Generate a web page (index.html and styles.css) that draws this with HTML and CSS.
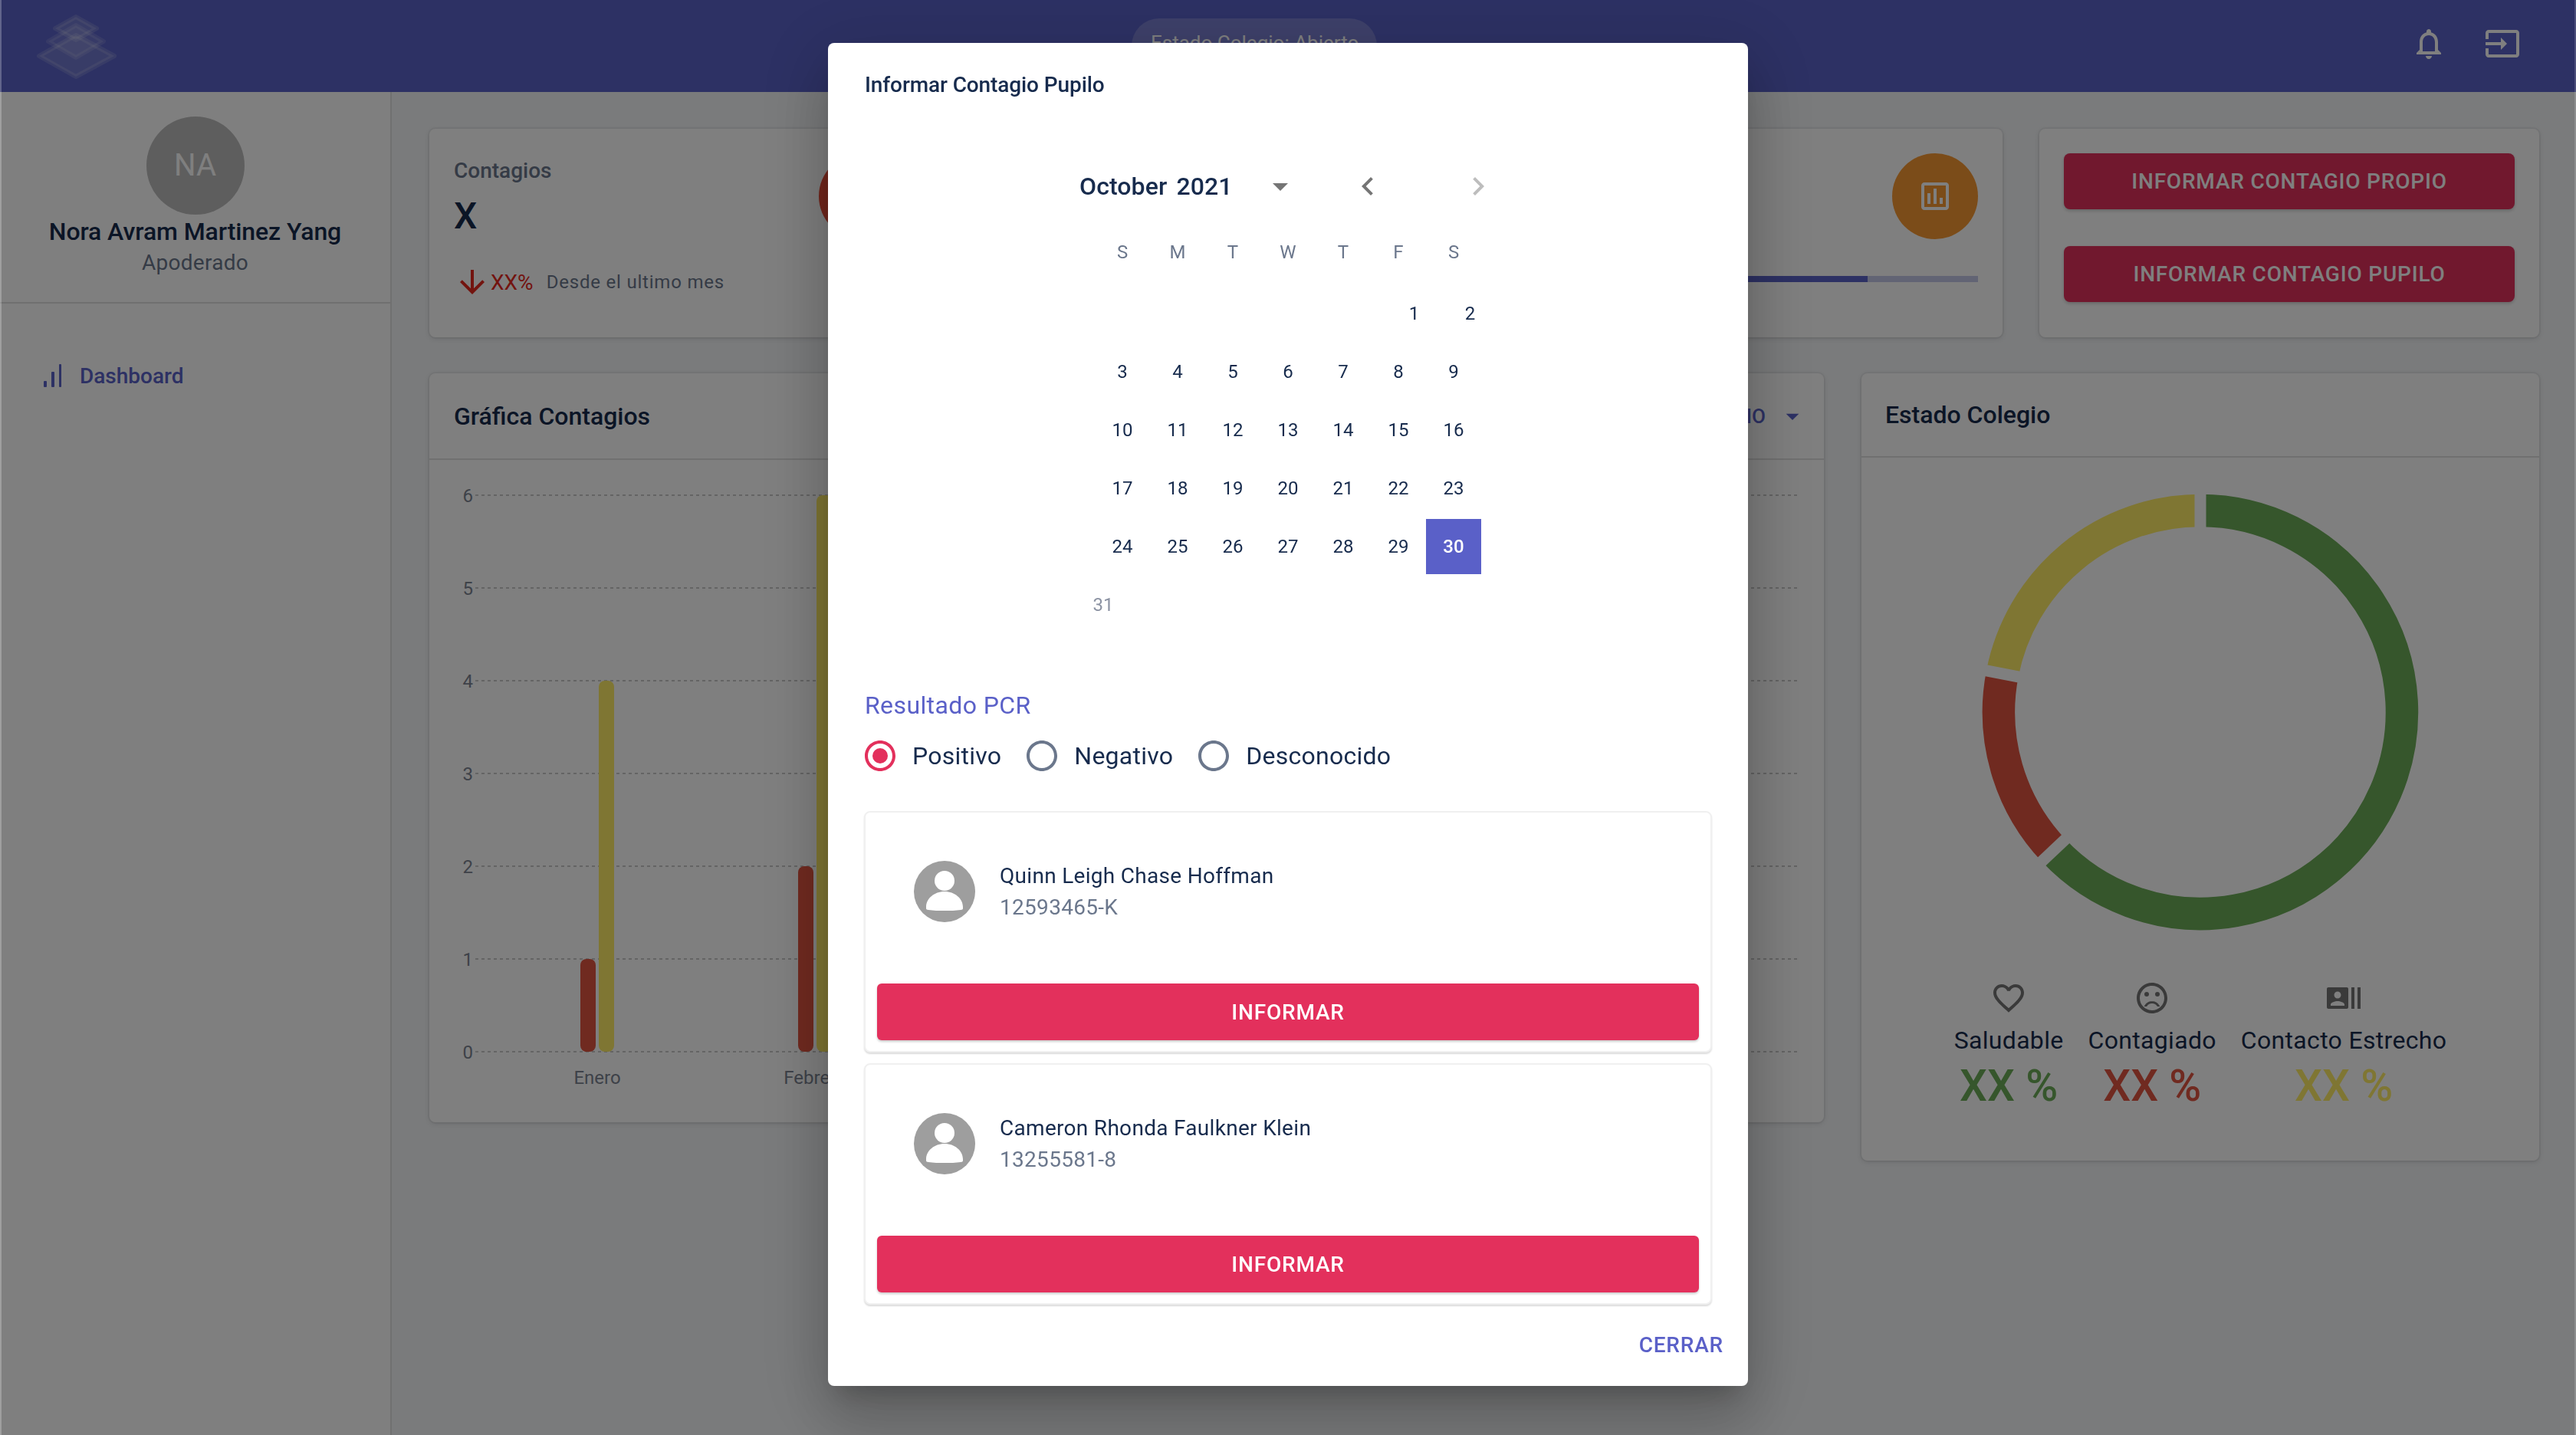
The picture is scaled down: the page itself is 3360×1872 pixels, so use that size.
FILE: index.html
```html
<!DOCTYPE html>
<html lang="es">
<head>
    <meta charset="UTF-8">
    <meta name="viewport" content="width=device-width, initial-scale=1.0">
    <title>Informar Contagio Pupilo</title>
    <link rel="stylesheet" href="styles.css">
</head>
<body>
    <header class="topbar">
        <svg class="logo" viewBox="0 0 180 120">
            <polygon class="logo_low" points="99,46 149,73 99,100 51,73"/>
            <polygon class="logo_mid" points="99,33 135,54 99,75 63,54"/>
            <polygon class="logo_top" points="99,22 126,37 99,52 72,37"/>
        </svg>
        <div class="status_pill">Estado Colegio: Abierto</div>
        <div class="topbar_icons">
            <svg class="icon48" viewBox="0 0 24 24"><path d="M12 22c1.1 0 2-.9 2-2h-4c0 1.1.9 2 2 2zm6-6v-5c0-3.07-1.63-5.64-4.5-6.32V4c0-.83-.67-1.5-1.5-1.5s-1.5.67-1.5 1.5v.68C7.64 5.36 6 7.92 6 11v5l-2 2v1h16v-1l-2-2zm-2 1H8v-6c0-2.48 1.51-4.5 4-4.5s4 2.02 4 4.5v6z"/></svg>
            <svg class="icon48" viewBox="0 0 24 24"><path d="M21 3.01H3c-1.1 0-2 .9-2 2V9h2V4.99h18v14.03H3V15H1v4.01c0 1.1.9 1.98 2 1.98h18c1.1 0 2-.88 2-1.98v-14c0-1.11-.9-2-2-2zM11 16l4-4-4-4v3H1v2h10v3z"/></svg>
        </div>
    </header>

    <div class="shell">
        <aside class="sidebar">
            <div class="profile">
                <div class="profile_avatar">NA</div>
                <div class="profile_name">Nora Avram Martinez Yang</div>
                <div class="profile_role">Apoderado</div>
            </div>
            <nav class="nav_item">
                <svg class="nav_icon" viewBox="0 0 24 30">
                    <rect x="1" y="22" width="4" height="8" rx="1"/>
                    <rect x="11" y="10" width="4" height="20" rx="1"/>
                    <rect x="21" y="0" width="3" height="30" rx="1"/>
                </svg>
                Dashboard
            </nav>
        </aside>

        <main class="content">
            <section class="stat_row">
                <div class="card stat_card">
                    <div class="stat_top">
                        <div>
                            <div class="stat_label">Contagios</div>
                            <div class="stat_value">X</div>
                        </div>
                        <div class="stat_circle circle_red"></div>
                    </div>
                    <div class="trend">
                        <svg class="icon48 trend_icon" viewBox="0 0 24 24"><path d="M20 12l-1.41-1.41L13 16.17V4h-2v12.17l-5.58-5.59L4 12l8 8 8-8z"/></svg>
                        <span class="trend_value">XX%</span>
                        <span class="trend_text">Desde el ultimo mes</span>
                    </div>
                </div>
                <div class="card stat_card"></div>
                <div class="card stat_card">
                    <div class="stat_top stat_top_end">
                        <div class="stat_circle circle_orange">
                            <svg class="icon48 circle_icon" viewBox="0 0 24 24"><path d="M19 3H5c-1.1 0-2 .9-2 2v14c0 1.1.9 2 2 2h14c1.1 0 2-.9 2-2V5c0-1.1-.9-2-2-2zm0 16H5V5h14v14zM9 17H7v-7h2v7zm4 0h-2V7h2v10zm4 0h-2v-4h2v4z"/></svg>
                        </div>
                    </div>
                    <div class="progress"><div class="progress_fill"></div></div>
                </div>
                <div class="card action_card">
                    <button class="action_but">INFORMAR CONTAGIO PROPIO</button>
                    <button class="action_but">INFORMAR CONTAGIO PUPILO</button>
                </div>
            </section>

            <section class="chart_row">
                <div class="card chart_card">
                    <div class="card_head">
                        <span class="card_title">Gráfica Contagios</span>
                        <span class="range_select">PROMEDIO
                            <svg class="icon40" viewBox="0 0 24 24"><path d="M7 10l5 5 5-5z"/></svg>
                        </span>
                    </div>
                    <svg class="bars" viewBox="0 0 1819 864">
                        <g class="bars_grid">
                            <line x1="60" x2="1784" y1="46" y2="46"/>
                            <line x1="60" x2="1784" y1="167" y2="167"/>
                            <line x1="60" x2="1784" y1="288" y2="288"/>
                            <line x1="60" x2="1784" y1="409" y2="409"/>
                            <line x1="60" x2="1784" y1="530" y2="530"/>
                            <line x1="60" x2="1784" y1="651" y2="651"/>
                            <line x1="60" x2="1784" y1="772" y2="772"/>
                        </g>
                        <g class="bars_ticks">
                            <text x="57" y="55">6</text>
                            <text x="57" y="176">5</text>
                            <text x="57" y="297">4</text>
                            <text x="57" y="418">3</text>
                            <text x="57" y="539">2</text>
                            <text x="57" y="660">1</text>
                            <text x="57" y="781">0</text>
                        </g>
                        <rect class="bar_red" x="197" y="651" width="20" height="121" rx="8"/>
                        <rect class="bar_yellow" x="221" y="288" width="20" height="484" rx="8"/>
                        <rect class="bar_red" x="481" y="530" width="20" height="242" rx="8"/>
                        <rect class="bar_yellow" x="505" y="46" width="20" height="726" rx="8"/>
                        <g class="bars_months">
                            <text x="219" y="814">Enero</text>
                            <text x="503" y="814">Febrero</text>
                        </g>
                    </svg>
                </div>

                <div class="card state_card">
                    <div class="card_head state_head">
                        <span class="card_title">Estado Colegio</span>
                    </div>
                    <div class="state_body">
                        <svg class="donut" viewBox="0 0 600 600">
                            <path class="seg_green" d="M300 37A263 263 0 1 1 108.5 480.3"/>
                            <path class="seg_red" d="M108.5 480.3A263 263 0 0 1 41.8 249.8"/>
                            <path class="seg_yellow" d="M41.8 249.8A263 263 0 0 1 300 37"/>
                            <line class="seg_gap" x1="300" y1="5" x2="300" y2="75"/>
                            <line class="seg_gap" x1="136.2" y1="454.2" x2="81.6" y2="505.7"/>
                            <line class="seg_gap" x1="79.1" y1="257.1" x2="5.5" y2="242.8"/>
                        </svg>
                        <div class="legend">
                            <div class="legend_item">
                                <svg class="icon48 legend_icon" viewBox="0 0 24 24"><path d="M16.5 3c-1.74 0-3.41.81-4.5 2.09C10.91 3.81 9.24 3 7.5 3 4.42 3 2 5.42 2 8.5c0 3.78 3.4 6.86 8.55 11.54L12 21.35l1.45-1.32C18.6 15.36 22 12.28 22 8.5 22 5.42 19.58 3 16.5 3zm-4.4 15.55l-.1.1-.1-.1C7.14 14.24 4 11.39 4 8.5 4 6.5 5.5 5 7.5 5c1.54 0 3.04.99 3.57 2.36h1.87C13.46 5.99 14.96 5 16.5 5c2 0 3.5 1.5 3.5 3.5 0 2.89-3.14 5.74-7.9 10.05z"/></svg>
                                <div class="legend_label">Saludable</div>
                                <div class="legend_value text_green">XX %</div>
                            </div>
                            <div class="legend_item">
                                <svg class="icon48 legend_icon" viewBox="0 0 24 24"><circle cx="15.5" cy="9.5" r="1.5"/><circle cx="8.5" cy="9.5" r="1.5"/><path d="M11.99 2C6.47 2 2 6.48 2 12s4.47 10 9.99 10C17.52 22 22 17.52 22 12S17.52 2 11.99 2zM12 20c-4.42 0-8-3.58-8-8s3.58-8 8-8 8 3.58 8 8-3.58 8-8 8zm0-6c-2.33 0-4.32 1.45-5.12 3.5h1.67c.69-1.19 1.97-2 3.45-2s2.75.81 3.45 2h1.67c-.8-2.05-2.79-3.5-5.12-3.5z"/></svg>
                                <div class="legend_label">Contagiado</div>
                                <div class="legend_value text_red">XX %</div>
                            </div>
                            <div class="legend_item">
                                <svg class="icon48 legend_icon" viewBox="0 0 24 24"><path d="M21 5v14h2V5h-2zm-4 14h2V5h-2v14zM14 5H2c-.55 0-1 .45-1 1v12c0 .55.45 1 1 1h12c.55 0 1-.45 1-1V6c0-.55-.45-1-1-1zM8 7.75c1.24 0 2.25 1.01 2.25 2.25S9.24 12.25 8 12.25 5.75 11.24 5.75 10 6.76 7.75 8 7.75zM12.5 17h-9v-.75c0-1.5 3-2.25 4.5-2.25s4.5.75 4.5 2.25V17z"/></svg>
                                <div class="legend_label">Contacto Estrecho</div>
                                <div class="legend_value text_yellow">XX %</div>
                            </div>
                        </div>
                    </div>
                </div>
            </section>
        </main>
    </div>

    <div class="backdrop">
        <div class="modal">
            <h2 class="modal_title">Informar Contagio Pupilo</h2>

            <div class="calendar">
                <div class="cal_head">
                    <span class="cal_month">October 2021</span>
                    <svg class="icon48 cal_caret" viewBox="0 0 24 24"><path d="M7 10l5 5 5-5z"/></svg>
                    <svg class="icon48 cal_prev" viewBox="0 0 24 24"><path d="M15.41 7.41L14 6l-6 6 6 6 1.41-1.41L10.83 12z"/></svg>
                    <svg class="icon48 cal_next" viewBox="0 0 24 24"><path d="M10 6L8.59 7.41 13.17 12l-4.58 4.59L10 18l6-6z"/></svg>
                </div>
                <div class="cal_week cal_days">
                    <span>S</span><span>M</span><span>T</span><span>W</span><span>T</span><span>F</span><span>S</span>
                </div>
                <div class="cal_week cal_first">
                    <span>1</span><span>2</span>
                </div>
                <div class="cal_week">
                    <span>3</span><span>4</span><span>5</span><span>6</span><span>7</span><span>8</span><span>9</span>
                </div>
                <div class="cal_week">
                    <span>10</span><span>11</span><span>12</span><span>13</span><span>14</span><span>15</span><span>16</span>
                </div>
                <div class="cal_week">
                    <span>17</span><span>18</span><span>19</span><span>20</span><span>21</span><span>22</span><span>23</span>
                </div>
                <div class="cal_week">
                    <span>24</span><span>25</span><span>26</span><span>27</span><span>28</span><span>29</span><span class="cal_selected">30</span>
                </div>
                <div class="cal_week cal_last">
                    <span>31</span>
                </div>
            </div>

            <div class="pcr_label">Resultado PCR</div>
            <div class="radios">
                <label class="radio">
                    <svg class="radio_on" viewBox="0 0 24 24"><path d="M12 2C6.48 2 2 6.48 2 12s4.48 10 10 10 10-4.48 10-10S17.52 2 12 2zm0 18c-4.42 0-8-3.58-8-8s3.58-8 8-8 8 3.58 8 8-3.58 8-8 8z"/><circle cx="12" cy="12" r="5"/></svg>
                    Positivo
                </label>
                <label class="radio">
                    <svg class="radio_off" viewBox="0 0 24 24"><path d="M12 2C6.48 2 2 6.48 2 12s4.48 10 10 10 10-4.48 10-10S17.52 2 12 2zm0 18c-4.42 0-8-3.58-8-8s3.58-8 8-8 8 3.58 8 8-3.58 8-8 8z"/></svg>
                    Negativo
                </label>
                <label class="radio">
                    <svg class="radio_off" viewBox="0 0 24 24"><path d="M12 2C6.48 2 2 6.48 2 12s4.48 10 10 10 10-4.48 10-10S17.52 2 12 2zm0 18c-4.42 0-8-3.58-8-8s3.58-8 8-8 8 3.58 8 8-3.58 8-8 8z"/></svg>
                    Desconocido
                </label>
            </div>

            <div class="pupil_list">
                <div class="pupil_card">
                    <div class="pupil_info">
                        <svg class="pupil_avatar" viewBox="0 0 80 80">
                            <circle class="pupil_bg" cx="40" cy="40" r="40"/>
                            <circle class="pupil_fg" cx="40" cy="26" r="13"/>
                            <path class="pupil_fg" d="M16 60c0-11 11-20 24-20s24 9 24 20v2c0 1-1 2-3 2-6 1-14 1-21 1s-15 0-21-1c-2 0-3-1-3-2z"/>
                        </svg>
                        <div>
                            <div class="pupil_name">Quinn Leigh Chase Hoffman</div>
                            <div class="pupil_rut">12593465-K</div>
                        </div>
                    </div>
                    <button class="pupil_but">INFORMAR</button>
                </div>
                <div class="pupil_card">
                    <div class="pupil_info">
                        <svg class="pupil_avatar" viewBox="0 0 80 80">
                            <circle class="pupil_bg" cx="40" cy="40" r="40"/>
                            <circle class="pupil_fg" cx="40" cy="26" r="13"/>
                            <path class="pupil_fg" d="M16 60c0-11 11-20 24-20s24 9 24 20v2c0 1-1 2-3 2-6 1-14 1-21 1s-15 0-21-1c-2 0-3-1-3-2z"/>
                        </svg>
                        <div>
                            <div class="pupil_name">Cameron Rhonda Faulkner Klein</div>
                            <div class="pupil_rut">13255581-8</div>
                        </div>
                    </div>
                    <button class="pupil_but">INFORMAR</button>
                </div>
            </div>

            <div class="modal_actions">
                <button class="close_but">CERRAR</button>
            </div>
        </div>
    </div>
</body>
</html>
```

FILE: styles.css
```css
* {
    box-sizing: border-box;
}
body {
    margin: 0;
    height: 1872px;
    overflow: hidden;
    background-color: #f4f6f8;
    color: #172b4d;
    font-family: Roboto, "Liberation Sans", sans-serif;
}
button {
    cursor: pointer;
    border: 0;
    font-family: inherit;
}

/* top bar */
.topbar {
    display: flex;
    align-items: center;
    height: 120px;
    background-color: #5a62c8;
    color: #ffffff;
}
.logo {
    flex: none;
    width: 180px;
    height: 120px;
}
.logo polygon {
    fill: #ffffff;
    stroke: #ffffff;
    stroke-width: 6;
    stroke-linejoin: round;
}
.logo .logo_low {
    fill-opacity: .14;
    stroke-opacity: .14;
}
.logo .logo_mid {
    fill-opacity: .12;
    stroke-opacity: .12;
}
.logo .logo_top {
    fill-opacity: .14;
    stroke-opacity: .14;
}
.status_pill {
    width: 320px;
    height: 72px;
    margin-left: 1296px;
    padding-left: 25px;
    border-radius: 36px;
    background-color: rgba(255, 255, 255, .2);
    font-size: 26px;
    line-height: 64px;
}
.topbar_icons {
    display: flex;
    gap: 48px;
    margin-left: auto;
    margin-right: 72px;
    margin-top: -6px;
    fill: #ffffff;
}
.icon48 {
    display: block;
    flex: none;
    width: 48px;
    height: 48px;
}
.icon40 {
    display: block;
    flex: none;
    width: 40px;
    height: 40px;
}

/* sidebar */
.shell {
    display: flex;
    height: 1752px;
}
.sidebar {
    flex: none;
    width: 511px;
    background-color: #ffffff;
    border-right: 2px solid #e0e0e0;
}
.profile {
    display: flex;
    flex-direction: column;
    align-items: center;
    height: 276px;
    padding-top: 32px;
    border-bottom: 2px solid #e0e0e0;
}
.profile_avatar {
    width: 128px;
    height: 128px;
    border-radius: 50%;
    background-color: #bdbdbd;
    color: #ffffff;
    font-size: 40px;
    line-height: 128px;
    text-align: center;
}
.profile_name {
    font-size: 32px;
    font-weight: 500;
    letter-spacing: -.1px;
    line-height: 44px;
}
.profile_role {
    margin-top: 1px;
    color: #6b778c;
    font-size: 28px;
    letter-spacing: .3px;
    line-height: 36px;
}
.nav_item {
    display: flex;
    align-items: center;
    gap: 24px;
    height: 48px;
    margin-top: 70px;
    padding-left: 56px;
    color: #5a62c8;
    font-size: 28px;
    font-weight: 500;
}
.nav_icon {
    width: 24px;
    height: 30px;
    fill: #5a62c8;
}

/* cards */
.content {
    flex: 1;
    padding: 48px 48px 0 49px;
}
.card {
    background-color: #ffffff;
    border-radius: 8px;
    box-shadow: 0 0 0 2px rgba(63, 63, 68, .05), 0 2px 6px rgba(63, 63, 68, .15);
}
.stat_row {
    display: grid;
    grid-template-columns: repeat(4, 1fr);
    gap: 48px;
}
.stat_card {
    height: 272px;
    padding: 32px;
}
.stat_top {
    display: flex;
    justify-content: space-between;
}
.stat_top_end {
    justify-content: flex-end;
}
.stat_label {
    margin-top: 5px;
    color: #6b778c;
    font-size: 28px;
    font-weight: 500;
    line-height: 36px;
}
.stat_value {
    margin-top: 13px;
    font-size: 48px;
    font-weight: 500;
    line-height: 56px;
}
.stat_circle {
    display: flex;
    align-items: center;
    justify-content: center;
    flex: none;
    width: 112px;
    height: 112px;
    border-radius: 50%;
}
.circle_red {
    background-color: #e54c38;
}
.circle_orange {
    background-color: #f79832;
}
.circle_icon {
    fill: #ffffff;
}
.trend {
    display: flex;
    align-items: center;
    margin-top: 32px;
}
.trend_icon {
    fill: #e6281e;
}
.trend_value {
    color: #e6281e;
    font-size: 28px;
}
.trend_text {
    margin-left: 17px;
    color: #6b778c;
    font-size: 24px;
    letter-spacing: .8px;
}
.progress {
    height: 8px;
    margin-top: 48px;
    background-color: #c5c8e8;
}
.progress_fill {
    width: 75.5%;
    height: 100%;
    background-color: #5a62c8;
}
.action_card {
    display: flex;
    flex-direction: column;
    gap: 48px;
    height: 272px;
    padding: 32px;
}
.action_but {
    height: 73px;
    border-radius: 8px;
    background-color: #e3305c;
    color: #ffffff;
    font-size: 28px;
    font-weight: 500;
    letter-spacing: .8px;
    box-shadow: 0 2px 4px rgba(0, 0, 0, .2);
}

/* second row */
.chart_row {
    display: grid;
    grid-template-columns: 1819px 884px;
    gap: 49px;
    align-items: start;
    margin-top: 47px;
}
.chart_card {
    height: 977px;
}
.card_head {
    display: flex;
    align-items: center;
    justify-content: space-between;
    height: 113px;
    padding: 0 21px 0 32px;
    border-bottom: 2px solid #e0e0e0;
}
.state_head {
    height: 110px;
    padding-left: 31px;
}
.card_title {
    font-size: 32px;
    font-weight: 500;
}
.range_select {
    display: flex;
    align-items: center;
    gap: 15px;
    color: #5a62c8;
    font-size: 26px;
    font-weight: 500;
    fill: #5a62c8;
}
.bars {
    display: block;
    width: 1819px;
    height: 864px;
}
.bars_grid line {
    stroke: #c8c8c8;
    stroke-width: 2;
    stroke-dasharray: 4 4;
}
.bars_ticks text {
    fill: #7c8492;
    font-size: 24px;
    text-anchor: end;
}
.bars_months text {
    fill: #7c8492;
    font-size: 24px;
    text-anchor: middle;
}
.bar_red {
    fill: #e05440;
}
.bar_yellow {
    fill: #ffec66;
}

/* estado colegio */
.state_card {
    height: 1027px;
}
.state_body {
    display: flex;
    flex-direction: column;
    align-items: center;
    padding-top: 32px;
}
.donut {
    display: block;
    width: 600px;
    height: 600px;
}
.donut path {
    fill: none;
    stroke-width: 42.5;
}
.seg_green {
    stroke: #6cac58;
}
.seg_red {
    stroke: #e05440;
}
.seg_yellow {
    stroke: #ffec66;
}
.seg_gap {
    stroke: #ffffff;
    stroke-width: 15;
}
.legend {
    display: flex;
    gap: 32px;
    margin-top: 49px;
}
.legend_item {
    display: flex;
    flex-direction: column;
    align-items: center;
}
.legend_icon {
    fill: #757575;
}
.legend_label {
    margin-top: 9px;
    font-size: 32px;
    letter-spacing: .32px;
    line-height: 44px;
}
.legend_value {
    margin-top: 6px;
    font-size: 57px;
    font-weight: 500;
    line-height: 64px;
}
.text_green {
    color: #6cac58;
}
.text_red {
    color: #e05440;
}
.text_yellow {
    color: #ffec66;
}

/* modal */
.backdrop {
    position: fixed;
    inset: 0;
    display: flex;
    justify-content: center;
    align-items: flex-start;
    padding-top: 56px;
    background-color: rgba(0, 0, 0, .5);
    border-left: 2px solid rgba(255, 255, 255, .25);
    border-right: 2px solid rgba(255, 255, 255, .15);
}
.modal {
    width: 1200px;
    height: 1752px;
    padding: 35px 48px 0;
    background-color: #ffffff;
    border-radius: 8px;
    box-shadow: 0 22px 30px -14px rgba(0, 0, 0, .2), 0 48px 76px 6px rgba(0, 0, 0, .14), 0 18px 92px 16px rgba(0, 0, 0, .12);
}
.modal_title {
    margin: 0;
    font-size: 28px;
    font-weight: 500;
    letter-spacing: -.1px;
    line-height: 40px;
}
.calendar {
    margin-top: 88px;
    margin-left: 300px;
    width: 504px;
}
.cal_head {
    display: flex;
    align-items: center;
    height: 48px;
    margin-left: -20px;
}
.cal_month {
    width: 200px;
    font-size: 32px;
    font-weight: 500;
    letter-spacing: .1px;
    word-spacing: 4px;
    white-space: nowrap;
}
.cal_caret {
    margin-left: 38px;
    fill: #757575;
}
.cal_prev {
    margin-left: 66px;
    fill: #757575;
}
.cal_next {
    margin-left: 96px;
    fill: #bdbdbd;
}
.cal_week {
    display: flex;
    margin-top: 4px;
}
.cal_week span {
    flex: none;
    width: 72px;
    height: 72px;
    font-size: 24px;
    line-height: 72px;
    text-align: center;
}
.cal_days {
    margin-top: 46px;
    margin-bottom: 28px;
}
.cal_days span {
    height: 32px;
    color: #6b778c;
    line-height: 32px;
}
.cal_first {
    padding-left: 380px;
}
.cal_first span {
    width: 73px;
}
.cal_last {
    margin-left: -25px;
}
.cal_last span {
    color: #8c93a3;
}
.cal_week .cal_selected {
    background-color: #5a60c8;
    color: #ffffff;
    font-weight: 500;
}
.pcr_label {
    margin-top: 75px;
    color: #5a60c8;
    font-size: 32px;
    letter-spacing: .4px;
    line-height: 40px;
}
.radios {
    display: flex;
    gap: 33px;
    height: 48px;
    margin-top: 22px;
}
.radio {
    display: flex;
    align-items: center;
    gap: 18px;
    font-size: 32px;
    letter-spacing: .25px;
    cursor: pointer;
}
.radio svg {
    width: 48px;
    height: 48px;
    margin-left: -4px;
}
.radio_on {
    fill: #e3305c;
}
.radio_off {
    fill: #6b778c;
}
.pupil_list {
    display: flex;
    flex-direction: column;
    gap: 14px;
    margin-top: 48px;
    margin-left: -1px;
    width: 1106px;
}
.pupil_card {
    display: flex;
    flex-direction: column;
    height: 315px;
    padding: 0 15px;
    background-color: #ffffff;
    border: 2px solid #f0f0f0;
    border-radius: 8px;
    box-shadow: 0 2px 2px rgba(0, 0, 0, .14);
}
.pupil_info {
    display: flex;
    align-items: center;
    gap: 32px;
    height: 206px;
    margin-bottom: 17px;
    padding-left: 48px;
}
.pupil_avatar {
    flex: none;
    width: 80px;
    height: 80px;
}
.pupil_bg {
    fill: #9e9e9e;
}
.pupil_fg {
    fill: #ffffff;
}
.pupil_name {
    font-size: 28px;
    letter-spacing: .3px;
    line-height: 40px;
}
.pupil_rut {
    margin-top: 1px;
    color: #6b778c;
    font-size: 28px;
    letter-spacing: .3px;
    line-height: 40px;
}
.pupil_but {
    height: 74px;
    border-radius: 6px;
    background-color: #e3305c;
    color: #ffffff;
    font-size: 28px;
    font-weight: 500;
    letter-spacing: .8px;
    box-shadow: 0 2px 3px rgba(0, 0, 0, .2);
}
.modal_actions {
    display: flex;
    justify-content: flex-end;
    margin-top: 33px;
    margin-right: -16px;
}
.close_but {
    padding: 0;
    background: none;
    color: #5a60c8;
    font-size: 28px;
    font-weight: 500;
    letter-spacing: .8px;
    line-height: 40px;
}
```
